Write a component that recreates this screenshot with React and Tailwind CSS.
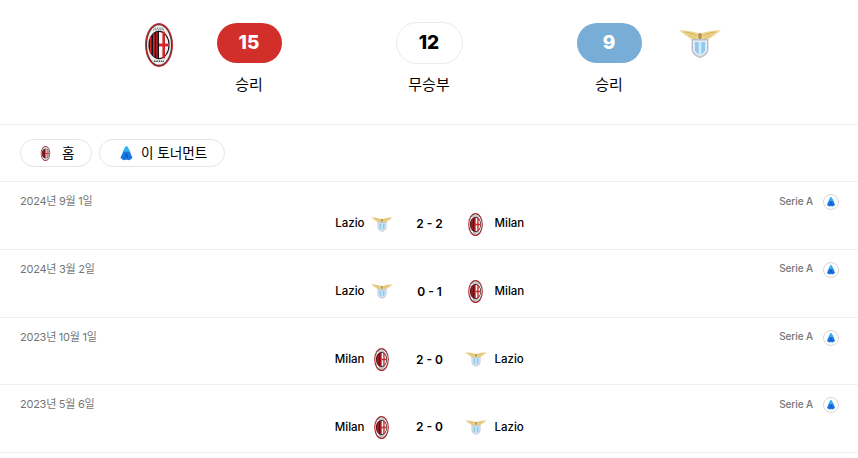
import React from "react";

const FONT = "font-['Inter','Noto_Sans_CJK_KR',sans-serif]";

function MilanCrest({ className }) {
  return (
    <svg viewBox="0 0 28 44" className={className}>
      <ellipse cx="14" cy="22" rx="14" ry="22" fill="#c4242c" />
      <ellipse cx="14" cy="22" rx="12.8" ry="20.6" fill="#3a3a3a" />
      <ellipse cx="14" cy="22" rx="12" ry="19.800" fill="#f0f0f0" />
      <ellipse cx="14" cy="22" rx="10.600" ry="14.200" fill="#141414" />
      {/* stripes */}
      <rect x="4.800" y="13.500" width="1.800" height="17" fill="#d0232c" />
      <rect x="8" y="10.500" width="1.800" height="23" fill="#d0232c" />
      <rect x="11.200" y="9" width="1.400" height="26" fill="#d0232c" />
      {/* cross side */}
      <path d="M14 9a9.500 13 0 0 1 9.500 13A9.500 13 0 0 1 14 35z" fill="#f4f4f4" />
      <rect x="17.400" y="8.600" width="2.600" height="26.800" fill="#d0232c" />
      <path d="M14 20.600h9.600v2.800H14z" fill="#d0232c" />
      {/* lettering bands */}
      <path d="M9.500 5.200h9M8 6.800h12" stroke="#555" strokeWidth="0.900" strokeDasharray="1.400 1" />
      <path d="M9 38.200h10" stroke="#444" strokeWidth="1.600" strokeDasharray="1.500 .8" />
    </svg>
  );
}

function LazioCrest({ className }) {
  return (
    <svg viewBox="0 0 42 28" className={className}>
      <path d="M0 0C6 .5 13 1 19 3l1.400 5.500-3.400 2.500C11 9 5 4 0 0z" fill="#ecd48f" />
      <path d="M42 0C36 .5 29 1 23 3l-1.400 5.500 3.400 2.500C31 9 37 4 42 0z" fill="#ecd48f" />
      <path d="M6 2C10 2.600 14 3.600 18 6M36 2C32 2.600 28 3.600 24 6" stroke="#c9a54e" strokeWidth=".8" fill="none" />
      <path d="M10 5.500C13 6.500 15.500 8 17.500 9.500M32 5.500C29 6.500 26.500 8 24.500 9.500" stroke="#d9b962" strokeWidth=".8" fill="none" />
      <path d="M19 4l2-1.200L23 4l-1 6h-2z" fill="#b0924a" />
      <path d="M12.500 9h17v10C29.500 23.500 25.500 26.600 21 28c-4.500-1.400-8.500-4.500-8.500-9z" fill="#b9bfce" />
      <path d="M14 10.500h14v8.500C28 22.500 24.500 25.300 21 26.500c-3.500-1.200-7-4-7-7.500z" fill="#e9edf2" />
      <path d="M15.800 12h10.400v7c0 2.800-2.400 4.800-5.200 6-2.800-1.200-5.200-3.200-5.200-6z" fill="#8fcbee" />
      <path d="M19.700 12h2.600v12.600h-2.600z" fill="#d5ecf8" />
    </svg>
  );
}

function SerieALogo({ className }) {
  return (
    <svg viewBox="0 0 20 20" className={className}>
      <path d="M10 0C11.500 1.500 13.800 5 15 8.500c1 3 2.500 5 3 7.200-2 3-5 3.600-6.500 3L10 18l-1.500.7c-1.500.6-4.500 0-6.500-3 .5-2.200 2-4.200 3-7.200C6.200 5 8.500 1.500 10 0z" fill="#1b78e2" />
      <path d="M10 0C11.500 1.500 13.800 5 15 8.500c-1.800-.8-3.400-1.200-5-1.200s-3.200.4-5 1.200C6.200 5 8.500 1.500 10 0z" fill="#2fb4f4" />
      <path d="M10 8.500l3 7.500h-1.300L10 12.400 8.300 16H7z" fill="#0f55c4" />
    </svg>
  );
}

function TeamCrest({ team }) {
  return team === "milan" ? (
    <MilanCrest className="h-[23px] w-[15px]" />
  ) : (
    <LazioCrest className="h-[15px] w-[22px]" />
  );
}

function ScorePill({ value, label, pillClass }) {
  return (
    <div className="flex w-[65px] flex-col items-center">
      <div className={`flex h-10 w-[65px] items-center justify-center rounded-[20px] text-[19px] font-extrabold ${pillClass}`}>
        {value}
      </div>
      <div className="mt-3 whitespace-nowrap text-[15px] leading-[20px] text-black">{label}</div>
    </div>
  );
}

const MATCHES = [
  { date: "2024년 9월 1일", home: "Lazio", away: "Milan", score: "2 - 2" },
  { date: "2024년 3월 2일", home: "Lazio", away: "Milan", score: "0 - 1" },
  { date: "2023년 10월 1일", home: "Milan", away: "Lazio", score: "2 - 0" },
  { date: "2023년 5월 6일", home: "Milan", away: "Lazio", score: "2 - 0" },
];

function MatchRow({ match }) {
  return (
    <div className="h-[67.75px] border-b border-[#f0f0f0] pl-5 pr-[19px] pt-3">
      <div className="flex items-start justify-between">
        <span className="text-[11px] leading-[14px] tracking-[-0.25px] text-[#757575]">{match.date}</span>
        <div className="flex h-4 items-center gap-[10px]">
          <span className="pb-[2px] text-[10px] font-medium tracking-[-0.1px] text-[#757575]">Serie A</span>
          <div className="flex h-4 w-4 items-center justify-center rounded-full border border-[#d8d8d8]">
            <SerieALogo className="h-[10px] w-[10px]" />
          </div>
        </div>
      </div>
      <div className="mt-[2px] flex h-[24px] items-center justify-center">
        <span className="w-[45px] whitespace-nowrap text-right text-[11.5px] font-medium text-black">{match.home}</span>
        <div className="flex w-[34px] justify-center"><TeamCrest team={match.home.toLowerCase()} /></div>
        <span className="w-[62px] text-center text-xs font-semibold text-black">{match.score}</span>
        <div className="flex w-[34px] justify-center pr-1"><TeamCrest team={match.away.toLowerCase()} /></div>
        <span className="w-[45px] whitespace-nowrap text-[11.5px] font-medium text-black">{match.away}</span>
      </div>
    </div>
  );
}

export default function App() {
  return (
    <div className={`min-h-screen bg-white ${FONT}`}>
      {/* head to head summary */}
      <div className="flex h-[125px] justify-center border-b border-[#f0f0f0] pt-[23px]">
        <div className="flex h-10 w-10 items-start justify-center">
          <MilanCrest className="h-[44px] w-[28px] shrink-0" />
        </div>
        <div className="ml-[38px]">
          <ScorePill value="15" label="승리" pillClass="bg-[#d32f2a] text-white" />
        </div>
        <div className="ml-[115px]">
          <ScorePill value="12" label="무승부" pillClass="bg-white text-black ring-1 ring-[#ebebeb]" />
        </div>
        <div className="ml-[115px]">
          <ScorePill value="9" label="승리" pillClass="bg-[#77add7] text-white" />
        </div>
        <div className="ml-[38px] flex h-10 w-10 items-start justify-center pt-[7px]">
          <LazioCrest className="h-[28px] w-[42px] shrink-0" />
        </div>
      </div>

      {/* filters */}
      <div className="flex h-[57px] gap-[7px] border-b border-[#f0f0f0] px-5 pt-[14px]">
        <button className="flex h-[28px] w-[72px] items-center rounded-[14px] border border-[#e6e6e6] pl-[19px] text-[13.6px] text-black">
          <MilanCrest className="h-[15px] w-[11px]" />
          <span className="ml-[11px]">홈</span>
        </button>
        <button className="flex h-[28px] w-[126px] items-center rounded-[14px] border border-[#e6e6e6] pl-[19px] text-[13.6px] text-black">
          <SerieALogo className="h-[15px] w-[15px]" />
          <span className="ml-[7px]">이 토너먼트</span>
        </button>
      </div>

      {/* matches */}
      {MATCHES.map((m) => (
        <MatchRow key={m.date} match={m} />
      ))}
    </div>
  );
}
